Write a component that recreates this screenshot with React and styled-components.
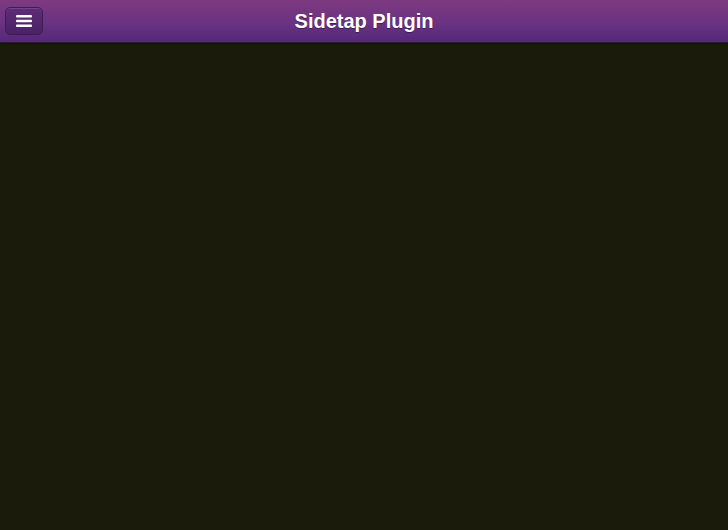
import React from 'react';
import styled, { createGlobalStyle } from 'styled-components';

const Global = createGlobalStyle`
  html, body {
    margin: 0;
    padding: 0;
    height: 100%;
    background: #1b1b0b;
    font-family: "Liberation Sans", Arial, sans-serif;
  }
  #root {
    height: 100%;
  }
`;

const App = () => {
  return (
    <>
      <Global />
      <Page>
        <Header>
          <MenuButton aria-label="Menu">
            <svg width="16" height="14" viewBox="0 0 16 14">
              <rect x="0" y="1" width="16" height="2.4" rx="1" fill="#fff" />
              <rect x="0" y="5.8" width="16" height="2.4" rx="1" fill="#fff" />
              <rect x="0" y="10.6" width="16" height="2.4" rx="1" fill="#fff" />
            </svg>
          </MenuButton>
          <Title>Sidetap Plugin</Title>
        </Header>
        <Content />
      </Page>
    </>
  );
};

const Page = styled.div`
  display: flex;
  flex-direction: column;
  height: 100vh;
`;

const Header = styled.header`
  position: relative;
  display: flex;
  align-items: center;
  justify-content: center;
  height: 42px;
  background: linear-gradient(to bottom, #7e3a80 0%, #6a3282 55%, #54287a 100%);
  border-bottom: 1px solid #2a1a30;
  box-shadow: 0 1px 2px rgba(0, 0, 0, 0.4);
`;

const MenuButton = styled.button`
  position: absolute;
  left: 5px;
  top: 7px;
  width: 38px;
  height: 28px;
  display: flex;
  align-items: center;
  justify-content: center;
  padding: 0;
  border: 1px solid #3e1d52;
  border-radius: 5px;
  background: linear-gradient(to bottom, #5e2c78, #4a2264);
  box-shadow: inset 0 1px 0 rgba(255, 255, 255, 0.12);
  cursor: pointer;
`;

const Title = styled.h1`
  margin: 0;
  font-size: 20px;
  line-height: 24px;
  font-weight: 700;
  color: #fff;
  text-shadow: 0 1px 1px rgba(0, 0, 0, 0.4);
`;

const Content = styled.main`
  flex: 1;
  background: #1b1b0b;
`;

export default App;
